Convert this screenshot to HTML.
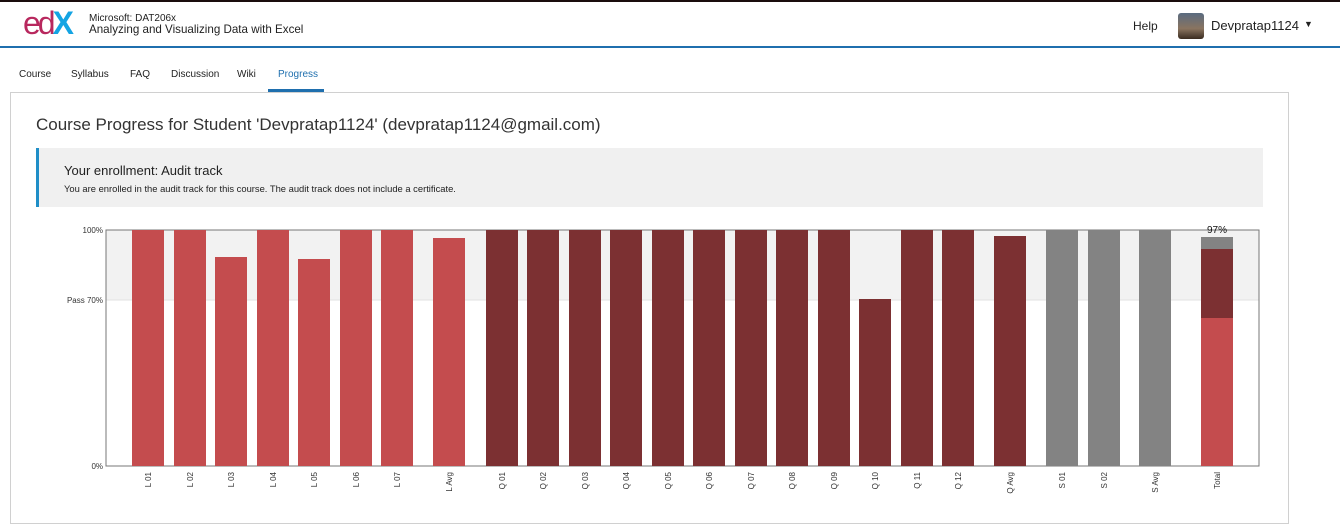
<!DOCTYPE html>
<html><head><meta charset="utf-8"><style>
body{margin:0;width:1340px;height:510px;overflow:hidden;background:#fff;font-family:"Liberation Sans",sans-serif;position:relative;color:#333}
.a{position:absolute;white-space:nowrap}
</style></head><body>
<div class="a" style="left:0;top:0;width:1340px;height:2px;background:#1a0d0d"></div>
<div class="a" style="left:0;top:46px;width:1340px;height:2px;background:#1f6fae"></div>
<div class="a" style="left:23px;top:5px;font:32px 'Liberation Sans',sans-serif;letter-spacing:-3px"><span style="color:#b8285e">ed</span><span style="color:#14a4e3;font-weight:bold">X</span></div>
<div class="a" style="left:89px;top:13px;font-size:10px;color:#222">Microsoft: DAT206x</div>
<div class="a" style="left:89px;top:23px;font-size:11.6px;color:#222">Analyzing and Visualizing Data with Excel</div>
<div class="a" style="left:1133px;top:19px;font-size:12px;color:#222">Help</div>
<div class="a" style="left:1178px;top:13px;width:26px;height:26px;border-radius:3px;background:linear-gradient(#5a6b80,#8a7460 60%,#3a2b20)"></div>
<div class="a" style="left:1211px;top:18px;font-size:13px;color:#222">Devpratap1124</div>
<div class="a" style="left:1304px;top:19px;font-size:9px;color:#222">▼</div>
<div class="a" style="top:69px;left:19px;font-size:10px;color:#222">Course</div>
<div class="a" style="top:69px;left:71px;font-size:10px;color:#222">Syllabus</div>
<div class="a" style="top:69px;left:130px;font-size:10px;color:#222">FAQ</div>
<div class="a" style="top:69px;left:171px;font-size:10px;color:#222">Discussion</div>
<div class="a" style="top:69px;left:237px;font-size:10px;color:#222">Wiki</div>
<div class="a" style="top:69px;left:278px;font-size:10px;color:#1f6fae">Progress</div>
<div class="a" style="left:268px;top:89px;width:56px;height:3px;background:#1f6fae"></div>
<div class="a" style="left:10px;top:92px;width:1277px;height:430px;border:1px solid #d0d0d0"></div>
<div class="a" style="left:36px;top:115px;font-size:17px;color:#333">Course Progress for Student 'Devpratap1124' (devpratap1124@gmail.com)</div>
<div class="a" style="left:36px;top:148px;width:1227px;height:59px;background:#f0f0f0;border-left:3px solid #1f8ec7;box-sizing:border-box"></div>
<div class="a" style="left:64px;top:163px;font-size:13px;color:#222">Your enrollment: Audit track</div>
<div class="a" style="left:64px;top:183px;font-size:9.4px;color:#222">You are enrolled in the audit track for this course. The audit track does not include a certificate.</div>
<svg class="a" style="left:0;top:0" width="1340" height="510" font-family="Liberation Sans,sans-serif" font-size="8" fill="#333">
<rect x="106" y="230" width="1153" height="70" fill="#f2f2f2"/>
<line x1="106" y1="300" x2="1259" y2="300" stroke="#e2e2e2"/>
<rect x="106" y="230" width="1153" height="236" fill="none" stroke="#777"/>
<text x="103" y="233" text-anchor="end">100%</text>
<text x="103" y="303" text-anchor="end">Pass 70%</text>
<text x="103" y="469" text-anchor="end">0%</text>
<g fill="#c44c4e">
<rect x="132" y="230" width="32" height="236"/><rect x="174" y="230" width="32" height="236"/>
<rect x="215" y="257" width="32" height="209"/><rect x="257" y="230" width="32" height="236"/>
<rect x="298" y="259" width="32" height="207"/><rect x="340" y="230" width="32" height="236"/>
<rect x="381" y="230" width="32" height="236"/><rect x="433" y="238" width="32" height="228"/>
<rect x="1201" y="318" width="32" height="148"/>
</g>
<g fill="#7c3032">
<rect x="486" y="230" width="32" height="236"/><rect x="527" y="230" width="32" height="236"/>
<rect x="569" y="230" width="32" height="236"/><rect x="610" y="230" width="32" height="236"/>
<rect x="652" y="230" width="32" height="236"/><rect x="693" y="230" width="32" height="236"/>
<rect x="735" y="230" width="32" height="236"/><rect x="776" y="230" width="32" height="236"/>
<rect x="818" y="230" width="32" height="236"/><rect x="859" y="299" width="32" height="167"/>
<rect x="901" y="230" width="32" height="236"/><rect x="942" y="230" width="32" height="236"/>
<rect x="994" y="236" width="32" height="230"/><rect x="1201" y="249" width="32" height="69"/>
</g>
<g fill="#838383">
<rect x="1046" y="230" width="32" height="236"/><rect x="1088" y="230" width="32" height="236"/>
<rect x="1139" y="230" width="32" height="236"/><rect x="1201" y="237" width="32" height="12"/>
</g>
<text x="1217" y="233" text-anchor="middle" font-size="10" fill="#111">97%</text>
<g text-anchor="end">
<text transform="translate(151,472) rotate(-90)">L 01</text>
<text transform="translate(193,472) rotate(-90)">L 02</text>
<text transform="translate(234,472) rotate(-90)">L 03</text>
<text transform="translate(276,472) rotate(-90)">L 04</text>
<text transform="translate(317,472) rotate(-90)">L 05</text>
<text transform="translate(359,472) rotate(-90)">L 06</text>
<text transform="translate(400,472) rotate(-90)">L 07</text>
<text transform="translate(452,472) rotate(-90)">L Avg</text>
<text transform="translate(505,472) rotate(-90)">Q 01</text>
<text transform="translate(546,472) rotate(-90)">Q 02</text>
<text transform="translate(588,472) rotate(-90)">Q 03</text>
<text transform="translate(629,472) rotate(-90)">Q 04</text>
<text transform="translate(671,472) rotate(-90)">Q 05</text>
<text transform="translate(712,472) rotate(-90)">Q 06</text>
<text transform="translate(754,472) rotate(-90)">Q 07</text>
<text transform="translate(795,472) rotate(-90)">Q 08</text>
<text transform="translate(837,472) rotate(-90)">Q 09</text>
<text transform="translate(878,472) rotate(-90)">Q 10</text>
<text transform="translate(920,472) rotate(-90)">Q 11</text>
<text transform="translate(961,472) rotate(-90)">Q 12</text>
<text transform="translate(1013,472) rotate(-90)">Q Avg</text>
<text transform="translate(1065,472) rotate(-90)">S 01</text>
<text transform="translate(1107,472) rotate(-90)">S 02</text>
<text transform="translate(1158,472) rotate(-90)">S Avg</text>
<text transform="translate(1220,472) rotate(-90)">Total</text>
</g>
</svg>
</body></html>
